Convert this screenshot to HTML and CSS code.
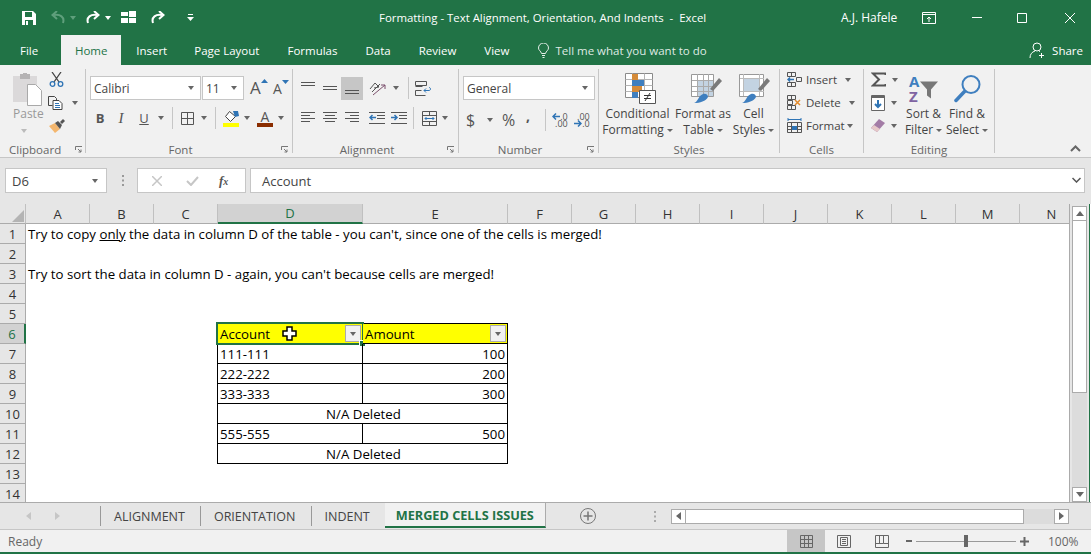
FILE: index.html
```html
<!DOCTYPE html>
<html lang="en">
<head>
    <meta charset="UTF-8">
    <title>Formatting - Text Alignment, Orientation, And Indents - Excel</title>
    <link rel="stylesheet" href="styles.css">
</head>
<body>
    <div class="titlebar">
        <div class="qat">
            <svg class="q-save" width="14" height="14" viewBox="0 0 14 14"><path fill="#fff" d="M0 0h11l3 3v11H0z"/><path fill="#217346" d="M3 1h7v5H3zM3 9h8v5H3z"/><path fill="#fff" d="M4 10h2v4H4z"/></svg>
            <svg class="q-undo" width="14" height="13" viewBox="0 0 14 13" fill="none" stroke="#5f9f7c" stroke-width="2"><path d="M12 12C14 6 9 3 3 4"/><path d="M6 0L1.500 4 6 8"/></svg>
            <i class="caret dim"></i>
            <svg class="q-redo" width="14" height="13" viewBox="0 0 14 13" fill="none" stroke="#fff" stroke-width="2"><path d="M2 12C0 6 5 3 11 4"/><path d="M8 0l4.500 4L8 8"/></svg>
            <i class="caret white"></i>
            <svg class="q-grid" width="15" height="13" viewBox="0 0 15 13" fill="#fff"><path d="M0 1h7v4H0zM0 7h7v5H0zM8 0h7v6H8zM8 7h7v5H8z"/></svg>
            <svg class="q-redo2" width="14" height="13" viewBox="0 0 14 13" fill="none" stroke="#fff" stroke-width="2"><path d="M2 12C0 6 5 3 11 4"/><path d="M8 0l4.500 4L8 8"/></svg>
            <svg class="q-more" width="7" height="7" viewBox="0 0 7 7" fill="#fff"><path d="M1 0h5v1H1zM0 3h7L3.500 7z"/></svg>
        </div>
        <div class="doc-title">Formatting - Text Alignment, Orientation, And Indents &nbsp;-&nbsp; Excel</div>
        <div class="user">A.J. Hafele</div>
        <svg class="win-ribbon" width="14" height="12" viewBox="0 0 14 12" fill="none" stroke="#fff"><path d="M.5.500h13v11H.5zM.5 2.500h13M7 10V5M5 7l2-2 2 2"/></svg>
        <svg class="win-min" width="10" height="1" viewBox="0 0 10 1"><path fill="#fff" d="M0 0h10v1H0z"/></svg>
        <svg class="win-max" width="10" height="10" viewBox="0 0 10 10" fill="none" stroke="#fff"><path d="M.5.500h9v9h-9z"/></svg>
        <svg class="win-close" width="10" height="10" viewBox="0 0 10 10" fill="none" stroke="#fff"><path d="M0 0l10 10M10 0L0 10"/></svg>
    </div>

    <div class="tabs">
        <span class="tab file">File</span>
        <span class="tab home">Home</span>
        <span class="tab insert">Insert</span>
        <span class="tab">Page Layout</span>
        <span class="tab">Formulas</span>
        <span class="tab">Data</span>
        <span class="tab">Review</span>
        <span class="tab">View</span>
        <svg class="bulb" width="11" height="15" viewBox="0 0 11 15" fill="none" stroke="#e6efe9"><path d="M3.500 10.500C3 8 .5 7.500.5 5a5 5 0 0 1 10 0c0 2.500-2.500 3-3 5.500zM4 12.500h3M4.500 14.500h2"/></svg>
        <span class="tell">Tell me what you want to do</span>
        <svg class="person" width="16" height="17" viewBox="0 0 16 17" fill="none" stroke="#fff"><circle cx="8" cy="5" r="4"/><path d="M1 16c0-4 2-6 5-7M10 9l1 .5M12.500 11v5M10 13.500h5"/></svg>
        <span class="share">Share</span>
    </div>

    <div class="ribbon">
        <section class="group g-clipboard">
            <div class="group-body">
                <div class="big paste">
                    <svg class="big-icon" width="29" height="33" viewBox="0 0 29 33"><path fill="#dbd9da" d="M0 3h24v26H0z"/><path fill="#b5b3b4" d="M7 1h3V0h4v1h3v5H7z"/><path fill="#fff" stroke="#a9a9a9" d="M14.500 11.500h8l6 6v15h-14z"/></svg>
                    <span class="big-text dim">Paste</span>
                    <i class="caret pale"></i>
                </div>
                <div class="rows clip-rows">
                    <div class="row">
                        <svg class="cut" width="15" height="15" viewBox="0 0 15 15" fill="none" stroke="#444"><path d="M3 0l7 10M12 0L5 10" stroke-width="1.300"/><circle cx="3.500" cy="12" r="2.300" stroke="#2f74b5" stroke-width="1.300"/><circle cx="11.500" cy="12" r="2.300" stroke="#2f74b5" stroke-width="1.300"/></svg>
                    </div>
                    <div class="row">
                        <svg width="15" height="14" viewBox="0 0 15 14" fill="none" stroke="#444"><path d="M.5.500h6l2 2v2M.5.500v9h4"/><path fill="#fff" d="M5 4.500h6l3 3v6H5z"/><path d="M7 7.500h4M7 9.500h5M7 11.500h5" stroke="#2f74b5"/></svg>
                        <i class="caret copy-caret"></i>
                    </div>
                    <div class="row">
                        <svg class="brush" width="16" height="14" viewBox="0 0 16 14"><path fill="#f4b76f" d="M0 7l6-3 5 6-5 4z"/><path fill="#555" d="M6 4l3-2 4 4-2 4z"/><path fill="#555" d="M11 3l3-3 2 2-3 3z"/></svg>
                    </div>
                </div>
            </div>
            <div class="group-label clip-label"><span>Clipboard</span></div>
            <svg class="launcher" width="7" height="7" viewBox="0 0 7 7" fill="none" stroke="#777"><path d="M.5 4V.5H7M3 3l3 3M6 3.500V6H3.500"/></svg>
        </section>

        <section class="group g-font">
            <div class="group-body stack">
                <div class="font-row1">
                    <div class="combo font-name">Calibri<i class="caret"></i></div>
                    <div class="combo font-size">11<i class="caret"></i></div>
                    <span class="grow">A<svg width="7" height="4" viewBox="0 0 7 4"><path fill="#2f74b5" d="M0 4l3.500-4L7 4z"/></svg></span>
                    <span class="grow small">A<svg width="7" height="4" viewBox="0 0 7 4"><path fill="#2f74b5" d="M0 0h7L3.500 4z"/></svg></span>
                </div>
                <div class="font-row2">
                    <b class="glyph">B</b>
                    <i class="glyph italic">I</i>
                    <u class="glyph">U</u>
                    <i class="caret"></i>
                    <span class="sep"></span>
                    <svg width="13" height="13" viewBox="0 0 13 13" fill="none" stroke="#555"><path d="M.5.500h12v12H.5zM6.500.5v12M.5 6.500h12"/></svg>
                    <i class="caret"></i>
                    <span class="sep"></span>
                    <svg width="16" height="17" viewBox="0 0 16 17"><path fill="#fff" stroke="#444" d="M6.500 1.500l6 5-5 5-5-5z"/><path fill="#2f74b5" d="M10 1h5l1 5-4 1z"/><path fill="#ff0" d="M0 13h16v4H0z"/></svg>
                    <i class="caret"></i>
                    <span class="color-a">A</span>
                    <i class="caret"></i>
                </div>
            </div>
            <div class="group-label"><span>Font</span></div>
            <svg class="launcher" width="7" height="7" viewBox="0 0 7 7" fill="none" stroke="#777"><path d="M.5 4V.5H7M3 3l3 3M6 3.500V6H3.500"/></svg>
        </section>

        <section class="group g-align">
            <div class="group-body stack">
                <div class="align-row1">
                    <svg width="14" height="14" viewBox="0 0 14 14" stroke="#555"><path d="M0 1.500h14M0 4.500h14"/></svg>
                    <svg width="14" height="14" viewBox="0 0 14 14" stroke="#555"><path d="M0 5.500h14M0 8.500h14"/></svg>
                    <span class="selected"><svg width="14" height="14" viewBox="0 0 14 14" stroke="#555"><path d="M0 9.500h14M0 12.500h14"/></svg></span>
                    <svg width="17" height="16" viewBox="0 0 17 16" fill="none" stroke="#555"><path d="M1 9l5-6 4 4-5 1M3 12l8-8"/><path d="M4 15L16 5M12 5h4v4" stroke="#7b4f6c"/></svg>
                    <i class="caret"></i>
                    <span class="sep"></span>
                    <svg width="16" height="15" viewBox="0 0 16 15" fill="none" stroke="#555"><path d="M.5.500h11v4H.5zM.5 5.500h7M.5 9.500h6M.5 14.500h10M.5 9.500v5"/><path d="M9 9.500h5c2 0 2-3 0-3M9 9.500l2-2M9 9.500l2 2" stroke="#2f74b5"/></svg>
                </div>
                <div class="align-row2">
                    <svg width="14" height="12" viewBox="0 0 14 12" stroke="#555"><path d="M0 .5h14M0 3.500h9M0 6.500h14M0 9.500h9"/></svg>
                    <svg width="14" height="12" viewBox="0 0 14 12" stroke="#555"><path d="M0 .5h14M2 3.500h10M0 6.500h14M2 9.500h10"/></svg>
                    <svg width="14" height="12" viewBox="0 0 14 12" stroke="#555"><path d="M0 .5h14M5 3.500h9M0 6.500h14M5 9.500h9"/></svg>
                    <svg width="16" height="12" viewBox="0 0 16 12" fill="none" stroke="#555"><path d="M0 .5h16M8 3.500h8M8 6.500h8M0 11.500h16"/><path d="M7 5.500H1M3.500 3l-2.500 2.500L3.500 8" stroke="#2f74b5" stroke-width="1.500"/></svg>
                    <svg width="16" height="12" viewBox="0 0 16 12" fill="none" stroke="#555"><path d="M0 .5h16M8 3.500h8M8 6.500h8M0 11.500h16"/><path d="M0 5.500h6M3.500 3L6 5.500 3.500 8" stroke="#2f74b5" stroke-width="1.500"/></svg>
                    <span class="sep"></span>
                    <svg width="15" height="15" viewBox="0 0 15 15" fill="none" stroke="#555"><path d="M.5.500h14v14H.5zM.5 4.500h14M.5 10.500h14M7.500.5v4M7.500 10.500v4"/><path d="M3 7.500h9M4.500 6L3 7.500 4.500 9M10.500 6L12 7.500 10.500 9" stroke="#2f74b5"/></svg>
                    <i class="caret"></i>
                </div>
            </div>
            <div class="group-label"><span>Alignment</span></div>
            <svg class="launcher" width="7" height="7" viewBox="0 0 7 7" fill="none" stroke="#777"><path d="M.5 4V.5H7M3 3l3 3M6 3.500V6H3.500"/></svg>
        </section>

        <section class="group g-number">
            <div class="group-body stack">
                <div class="combo number-format">General<i class="caret"></i></div>
                <div class="number-row2">
                    <span class="glyph big-glyph">$</span>
                    <i class="caret"></i>
                    <span class="glyph big-glyph">%</span>
                    <b class="glyph comma">,</b>
                    <span class="sep"></span>
                    <div class="decimals">
                        <span class="dec-line"><svg width="8" height="7" viewBox="0 0 8 7" fill="none" stroke="#2f74b5" stroke-width="1.500"><path d="M8 3.500H1M4 .5L1 3.500l3 3"/></svg>.0</span>
                        <span class="dec-line">.00</span>
                    </div>
                    <div class="decimals">
                        <span class="dec-line">.00</span>
                        <span class="dec-line"><svg width="8" height="7" viewBox="0 0 8 7" fill="none" stroke="#2f74b5" stroke-width="1.500"><path d="M0 3.500h7M4 .5l3 3-3 3"/></svg>.0</span>
                    </div>
                </div>
            </div>
            <div class="group-label"><span>Number</span></div>
            <svg class="launcher" width="7" height="7" viewBox="0 0 7 7" fill="none" stroke="#777"><path d="M.5 4V.5H7M3 3l3 3M6 3.500V6H3.500"/></svg>
        </section>

        <section class="group g-styles">
            <div class="group-body">
                <div class="big cond">
                    <svg class="big-icon" width="31" height="31" viewBox="0 0 31 31"><path fill="#fff" stroke="#8a8a8a" d="M.5.500h27v24H.5z"/><path stroke="#b5b5b5" d="M7.500.5v24M19.500.5v24M.5 6.500h27M.5 12.500h27M.5 18.500h27"/><path fill="#d58b39" d="M7 1h6v6H7zM7 13h10v6H7z"/><path fill="#3f7fbf" d="M7 7h12v6H7zM7 19h6v6H7z"/><path fill="#fff" stroke="#555" d="M14.500 17.500h16v13h-16z"/><path stroke="#333" d="M19 22.500h7M19 25.500h7M25 20l-5 8" fill="none"/></svg>
                    <span class="big-text">Conditional</span>
                    <span class="big-text">Formatting<i class="caret tight"></i></span>
                </div>
                <div class="big fmt-table">
                    <svg class="big-icon" width="31" height="31" viewBox="0 0 31 31"><path fill="#fff" stroke="#999" d="M.5 1.500h22v22H.5z"/><path fill="#c3d3e2" d="M6 7h16v16H6z"/><path stroke="#aaa" d="M6.500 1v22M12.500 1v22M17.500 1v22M1 7.500h21M1 13.500h21M1 18.500h21"/><path fill="#7a7a7a" d="M19 16l9-11 3 3-9 10z"/><path fill="#3f7fbf" d="M3 30c4-1 4-7 9-9 3-1 5 1 5 3-2 4-8 6-14 6z"/></svg>
                    <span class="big-text">Format as</span>
                    <span class="big-text">Table<i class="caret tight"></i></span>
                </div>
                <div class="big cell-styles">
                    <svg class="big-icon" width="31" height="31" viewBox="0 0 31 31"><path fill="#fff" stroke="#999" d="M.5 1.500h24v22H.5z"/><path fill="#c3d3e2" d="M5 6h15v12H5z"/><path stroke="#bbb" d="M4.500 1v22M20.500 1v22M1 5.500h24M1 18.500h24"/><path fill="#7a7a7a" d="M19 16l9-11 3 3-9 10z"/><path fill="#3f7fbf" d="M3 30c4-1 4-7 9-9 3-1 5 1 5 3-2 4-8 6-14 6z"/></svg>
                    <span class="big-text">Cell</span>
                    <span class="big-text">Styles<i class="caret tight"></i></span>
                </div>
            </div>
            <div class="group-label"><span>Styles</span></div>
        </section>

        <section class="group g-cells">
            <div class="group-body">
                <div class="rows">
                    <div class="row cell-row">
                        <svg width="15" height="15" viewBox="0 0 15 15" fill="none" stroke="#555"><path d="M.5.500h8v4h-8zM4.500.5v4M.5 10.500h8v4h-8zM4.500 10.500v4"/><path d="M9.500 5.500h5v4h-5z"/><path d="M7 7.500H1M3 5.500l-2 2 2 2" stroke="#2f74b5" stroke-width="1.500"/></svg>
                        <span>Insert</span><i class="caret"></i>
                    </div>
                    <div class="row cell-row">
                        <svg width="15" height="15" viewBox="0 0 15 15" fill="none" stroke="#555"><path d="M.5.500h8v4h-8zM4.500.5v4M.5 10.500h8v4h-8zM4.500 10.500v4M.5 5.500h5v4h-5z"/><path d="M8 5l5 5M13 5l-5 5" stroke="#e28a2b" stroke-width="1.500"/></svg>
                        <span>Delete</span><i class="caret"></i>
                    </div>
                    <div class="row cell-row">
                        <svg width="15" height="15" viewBox="0 0 15 15" fill="none" stroke="#555"><path d="M.5 4.500h14v10H.5zM4.500 4.500v10M10.500 4.500v10M.5 8.500h14M.5 11.500h14"/><path d="M5 8h5v4H5z" fill="#2f74b5" stroke="none"/><path d="M1 1.500h13M1 0v3M14 0v3" stroke="#2f74b5"/></svg>
                        <span>Format</span><i class="caret near"></i>
                    </div>
                </div>
            </div>
            <div class="group-label"><span>Cells</span></div>
        </section>

        <section class="group g-editing">
            <div class="group-body">
                <div class="rows edit-rows">
                    <div class="row">
                        <svg width="15" height="15" viewBox="0 0 15 15" fill="none" stroke="#555" stroke-width="2"><path d="M14.500 3V1.500H2L8 7.500 2 13.500h12.500V12"/></svg>
                        <i class="caret"></i>
                    </div>
                    <div class="row">
                        <svg width="14" height="16" viewBox="0 0 14 16" fill="#fff" stroke="#666"><path d="M.5.500h13v15H.5z"/><path d="M1 1h12v2H1z" fill="#666" stroke="none"/><path d="M7 5v7M4 9l3 3 3-3" fill="none" stroke="#2f74b5" stroke-width="2"/></svg>
                        <i class="caret"></i>
                    </div>
                    <div class="row">
                        <svg width="14" height="13" viewBox="0 0 14 13"><path fill="#a37ca6" d="M0 9l8-9 6 4-8 9z"/><path fill="#e6c8c8" d="M0 9l3-3 6 4-3 3z"/></svg>
                        <i class="caret"></i>
                    </div>
                </div>
                <div class="big sort">
                    <svg class="big-icon" width="29" height="28" viewBox="0 0 29 28"><text x="0" y="12" class="sort-a">A</text><text x="0" y="27" class="sort-z">Z</text><path fill="#777" d="M11 7h18l-7 8v9l-4-3v-6z"/></svg>
                    <span class="big-text">Sort &amp;</span>
                    <span class="big-text">Filter<i class="caret tight"></i></span>
                </div>
                <div class="big find">
                    <svg class="big-icon" width="27" height="28" viewBox="0 0 27 28" fill="none" stroke="#3f7fbf"><circle cx="17" cy="10" r="8.500" stroke-width="2"/><path d="M10.500 17L2 26" stroke-width="3.500" stroke-linecap="round"/></svg>
                    <span class="big-text">Find &amp;</span>
                    <span class="big-text">Select<i class="caret tight"></i></span>
                </div>
            </div>
            <div class="group-label"><span>Editing</span></div>
        </section>

        <svg class="collapse" width="11" height="7" viewBox="0 0 11 7" fill="none" stroke="#666" stroke-width="2"><path d="M1 6l4.500-4.500L10 6"/></svg>
    </div>

    <div class="formula">
        <div class="box name-box">D6<i class="caret"></i></div>
        <svg class="grip" width="3" height="11" viewBox="0 0 3 11" fill="#999"><path d="M0 0h2v2H0zM0 4.500h2v2H0zM0 9h2v2H0z"/></svg>
        <div class="box fx-box">
            <svg width="10" height="10" viewBox="0 0 10 10" fill="none" stroke="#c6c6c6" stroke-width="1.500"><path d="M0 0l10 10M10 0L0 10"/></svg>
            <svg width="13" height="10" viewBox="0 0 13 10" fill="none" stroke="#c6c6c6" stroke-width="2"><path d="M1 5l4 4 7-8"/></svg>
            <span class="fx">f<small>x</small></span>
        </div>
        <div class="box input-box">Account
            <svg class="input-down" width="9" height="6" viewBox="0 0 9 6" fill="none" stroke="#555" stroke-width="1.500"><path d="M.5 1l4 4 4-4"/></svg>
        </div>
    </div>

    <div class="sheet-area">
        <div class="sheet">
            <table class="grid">
                <colgroup>
                    <col class="c-head"><col class="c-std"><col class="c-std"><col class="c-std"><col class="c-wide"><col class="c-wide"><col class="c-std"><col class="c-std"><col class="c-std"><col class="c-std"><col class="c-std"><col class="c-std"><col class="c-std"><col class="c-std"><col class="c-std">
                </colgroup>
                <tr>
                    <th class="corner"><svg width="12" height="12" viewBox="0 0 12 12"><path fill="#b4b4b4" d="M12 0v12H0z"/></svg></th>
                    <th>A</th><th>B</th><th>C</th><th class="active-col">D</th><th>E</th><th>F</th><th>G</th><th>H</th><th>I</th><th>J</th><th>K</th><th>L</th><th>M</th><th>N</th>
                </tr>
                <tr><th>1</th><td colspan="14">Try to copy <u>only</u> the data in column D of the table - you can't, since one of the cells is merged!</td></tr>
                <tr><th>2</th><td colspan="14"></td></tr>
                <tr><th>3</th><td colspan="14">Try to sort the data in column D - again, you can't because cells are merged!</td></tr>
                <tr><th>4</th><td colspan="14"></td></tr>
                <tr><th>5</th><td colspan="3"></td><td class="edge-b"></td><td class="edge-b"></td><td colspan="9"></td></tr>
                <tr>
                    <th class="active-row">6</th><td colspan="2"></td><td class="edge-r"></td>
                    <td class="cell head sel">Account
                        <span class="filter"><i class="caret"></i></span>
                        <span class="selection"></span>
                        <span class="handle"></span>
                        <svg class="pointer" width="15" height="15" viewBox="0 0 15 15"><path fill="#fff" stroke="#000" stroke-width="1.500" d="M5 1h5v4h4v5h-4v4H5v-4H1V5h4z"/></svg>
                    </td>
                    <td class="cell head">Amount<span class="filter"><i class="caret"></i></span></td>
                    <td colspan="9"></td>
                </tr>
                <tr><th>7</th><td colspan="2"></td><td class="edge-r"></td><td class="cell">111-111</td><td class="cell num">100</td><td colspan="9"></td></tr>
                <tr><th>8</th><td colspan="2"></td><td class="edge-r"></td><td class="cell">222-222</td><td class="cell num">200</td><td colspan="9"></td></tr>
                <tr><th>9</th><td colspan="2"></td><td class="edge-r"></td><td class="cell">333-333</td><td class="cell num">300</td><td colspan="9"></td></tr>
                <tr><th>10</th><td colspan="2"></td><td class="edge-r"></td><td class="cell merged" colspan="2">N/A Deleted</td><td colspan="9"></td></tr>
                <tr><th>11</th><td colspan="2"></td><td class="edge-r"></td><td class="cell">555-555</td><td class="cell num">500</td><td colspan="9"></td></tr>
                <tr><th>12</th><td colspan="2"></td><td class="edge-r"></td><td class="cell merged" colspan="2">N/A Deleted</td><td colspan="9"></td></tr>
                <tr><th>13</th><td colspan="14"></td></tr>
                <tr><th>14</th><td colspan="14"></td></tr>
            </table>
        </div>
        <div class="vscroll">
            <span class="sb-btn"><i class="tri up"></i></span>
            <span class="sb-thumb"></span>
            <span class="sb-track"></span>
            <span class="sb-btn"><i class="tri down"></i></span>
        </div>
    </div>

    <div class="sheet-tabs">
        <div class="tab-nav"><i class="tri left pale-tri"></i><i class="tri right pale-tri"></i></div>
        <span class="sheet-tab">ALIGNMENT</span>
        <span class="sheet-tab">ORIENTATION</span>
        <span class="sheet-tab no-sep">INDENT</span>
        <span class="sheet-tab current">MERGED CELLS ISSUES</span>
        <svg class="add-sheet" width="16" height="16" viewBox="0 0 16 16" fill="none" stroke="#777"><circle cx="8" cy="8" r="7.500"/><path d="M8 3.500v9M3.500 8h9" stroke-width="1.500"/></svg>
        <svg class="grip tab-grip" width="3" height="11" viewBox="0 0 3 11" fill="#aaa"><path d="M0 0h2v2H0zM0 4.500h2v2H0zM0 9h2v2H0z"/></svg>
        <div class="hscroll">
            <span class="sb-btn h"><i class="tri left"></i></span>
            <span class="hs-thumb"></span>
            <span class="hs-track"></span>
            <span class="sb-btn h"><i class="tri right"></i></span>
        </div>
    </div>

    <div class="statusbar">
        <span class="ready">Ready</span>
        <div class="views">
            <span class="view on"><svg width="13" height="13" viewBox="0 0 13 13" fill="none" stroke="#666"><path d="M.5.500h12v12H.5zM4.500.5v12M8.500.5v12M.5 4.500h12M.5 8.500h12"/></svg></span>
            <span class="view"><svg width="14" height="13" viewBox="0 0 14 13" fill="none" stroke="#666"><path d="M.5.500h13v12H.5zM3.500 2.500h7v8h-7zM5 4.500h4M5 6.500h4M5 8.500h4"/></svg></span>
            <span class="view"><svg width="14" height="13" viewBox="0 0 14 13" fill="none" stroke="#666"><path d="M.5.500h13v12H.5zM.5 8.500h8M4.500.5v8M8.500.5v8h5"/></svg></span>
        </div>
        <i class="zoom-minus"></i>
        <div class="zoom-slider"><i class="zoom-thumb"></i></div>
        <svg class="zoom-plus" width="9" height="9" viewBox="0 0 9 9" stroke="#666" stroke-width="2"><path d="M4.500 0v9M0 4.500h9"/></svg>
        <span class="zoom-pct">100%</span>
    </div>
</body>
</html>
```

FILE: styles.css
```css
* {
    box-sizing: border-box;
}
html, body {
    margin: 0;
    height: 554px;
    overflow: hidden;
}
body {
    font-family: "Open Sans", "Noto Sans", sans-serif;
    font-size: 12px;
    color: #444;
    background: #e6e6e6;
}
svg {
    display: block;
    flex: none;
}

/* shared bits */
.caret {
    display: inline-block;
    flex: none;
    width: 0;
    height: 0;
    border-top: 4px solid #666;
    border-left: 3.5px solid transparent;
    border-right: 3.5px solid transparent;
}
.caret.white { border-top-color: #fff; }
.caret.dim { border-top-color: #5f9f7c; }
.caret.pale { border-top-color: #bbb; }
.caret.tight {
    margin-left: 3px;
    vertical-align: 2px;
    border-top-width: 3px;
    border-left-width: 3px;
    border-right-width: 3px;
}
.sep {
    display: block;
    width: 1px;
    height: 22px;
    background: #c6c6c6;
}
.tri {
    display: block;
    width: 0;
    height: 0;
    border: 4px solid transparent;
}
.tri.up { border-top: 0; border-bottom: 5px solid #666; }
.tri.down { border-bottom: 0; border-top: 5px solid #666; }
.tri.left { border-left: 0; border-right: 5px solid #666; }
.tri.right { border-right: 0; border-left: 5px solid #666; }
.tri.left.pale-tri { border-right-color: #c6c6c6; }
.tri.right.pale-tri { border-left-color: #c6c6c6; }

/* title bar */
.titlebar {
    display: flex;
    align-items: center;
    height: 35px;
    background: #217346;
    color: #fff;
}
.qat {
    display: flex;
    align-items: center;
    padding-left: 22px;
    width: 379px;
}
.q-undo { margin-left: 15px; }
.qat .caret.dim { margin: 0 0 0 5px; }
.q-redo { margin-left: 10px; }
.qat .caret.white { margin-left: 5px; }
.q-grid { margin-left: 10px; }
.q-redo2 { margin-left: 15px; }
.q-more { margin-left: 22px; }
.doc-title {
    width: 462px;
    font-size: 11.4px;
    white-space: pre;
}
.user { width: 81px; }
.win-ribbon { margin-right: 36px; }
.win-min { margin-right: 35px; }
.win-max { margin-right: 38px; }

/* ribbon tabs */
.tabs {
    display: flex;
    align-items: center;
    height: 30px;
    padding: 0 8px 0 20px;
    background: #217346;
    color: #fff;
    font-size: 11.5px;
    white-space: nowrap;
}
.tab { margin-right: 28px; }
.tab.file { margin-right: 23px; }
.tab.home {
    display: flex;
    align-items: center;
    justify-content: center;
    width: 60px;
    height: 30px;
    background: #f1f1f1;
    color: #217346;
    margin-right: 15px;
}
.tab.insert { margin-right: 27px; }
.tab + .bulb { margin: 0 6px 0 1px; }
.tell { color: #dfeae4; }
.person { margin: 0 7px 0 auto; }

/* ribbon */
.ribbon {
    position: relative;
    display: flex;
    height: 93px;
    padding-top: 4px;
    background: #f1f1f1;
    border-bottom: 1px solid #c6c6c6;
}
.group {
    position: relative;
    display: flex;
    flex-direction: column;
    height: 84px;
    border-right: 1px solid #c6c6c6;
}
.g-clipboard { width: 86px; }
.g-font { width: 207px; }
.g-align { width: 166px; }
.g-number { width: 140px; }
.g-styles { width: 181px; }
.g-cells { width: 84px; }
.g-editing { width: 131px; }
.group-body {
    display: flex;
    height: 74px;
}
.group-body.stack {
    flex-direction: column;
    padding-top: 7px;
}
.group-label {
    height: 10px;
    line-height: 14px;
    font-size: 11.5px;
    text-align: center;
    color: #666;
    white-space: nowrap;
}
.g-font .group-label,
.g-align .group-label,
.g-number .group-label {
    padding-right: 17px;
}
.clip-label {
    text-align: left;
    padding-left: 9px;
}
.launcher {
    position: absolute;
    right: 4px;
    bottom: 0;
}
.g-clipboard .launcher { right: 3px; }
.big {
    display: flex;
    flex-direction: column;
    align-items: center;
    white-space: nowrap;
    color: #444;
}
.big-icon {
    height: 31px;
    margin: 4px 0 2px;
}
.big-text {
    height: 16px;
    line-height: 16px;
}
.big-text.dim { color: #999; }
.rows {
    display: flex;
    flex-direction: column;
    margin-top: -1px;
}
.row {
    display: flex;
    align-items: center;
    height: 23px;
}

/* clipboard */
.paste {
    width: 42px;
    padding-left: 13px;
    align-items: flex-start;
}
.paste .big-icon { flex: none; height: 33px; margin: 4px 0 0; }
.paste .caret { margin: 7px 0 0 8px; }
.clip-rows { padding-left: 6px; }
.cut { margin-left: 1px; }
.brush { margin-left: 1px; }
.copy-caret { margin-left: 9px; }

/* font */
.combo {
    display: flex;
    align-items: center;
    justify-content: space-between;
    height: 24px;
    padding: 0 6px 0 3px;
    background: #fff;
    border: 1px solid #c6c6c6;
    color: #444;
}
.font-row1 {
    display: flex;
    align-items: center;
    margin-left: 4px;
}
.font-name { width: 111px; margin-right: 1px; }
.font-size { width: 42px; }
.grow {
    display: flex;
    align-items: flex-start;
    margin-left: 6px;
    width: 17px;
    font-size: 17px;
    line-height: 20px;
    color: #555;
}
.grow svg { margin-top: 1px; }
.grow.small { margin-left: 6px; font-size: 14px; padding-top: 2px; }
.font-row2 {
    display: grid;
    grid-template-columns: 20px 22px 24px 10px 12px 18px 16px 6px 26px 6px 30px 2px;
    align-items: center;
    justify-items: center;
    height: 24px;
    margin: 6px 0 0 4px;
}
.glyph {
    font-size: 13px;
    font-style: normal;
    color: #555;
}
.glyph.italic { font-family: "Liberation Serif", serif; font-style: italic; font-size: 15px; }
b.glyph { font-weight: 700; }
.color-a {
    width: 16px;
    height: 17px;
    line-height: 13px;
    text-align: center;
    font-size: 14px;
    color: #555;
    border-bottom: 4px solid #8a2d00;
}

/* alignment */
.align-row1, .align-row2 {
    display: grid;
    align-items: center;
    justify-items: center;
    margin-left: 4px;
}
.align-row1 {
    grid-template-columns: 22px 22px 22px 28px 10px 14px 16px;
    height: 24px;
    justify-content: start;
}
.selected {
    display: flex;
    align-items: center;
    justify-content: center;
    width: 22px;
    height: 23px;
    background: #c6c6c6;
}
.align-row2 {
    grid-template-columns: 22px 22px 22px 28px 16px 12px 20px 12px;
    height: 24px;
    margin-top: 6px;
    justify-content: start;
}

/* number */
.number-format {
    width: 132px;
    margin-left: 4px;
}
.number-row2 {
    display: grid;
    grid-template-columns: 19px 20px 17px 22px 12px 18px 26px;
    align-items: center;
    justify-items: center;
    height: 24px;
    margin: 6px 0 0 2px;
}
.big-glyph { font-size: 16px; }
.comma {
    font-size: 14px;
    margin-bottom: 9px;
}
.decimals {
    display: flex;
    flex-direction: column;
    align-items: flex-end;
    font-size: 9px;
    line-height: 7px;
    color: #555;
}
.dec-line {
    display: flex;
    align-items: center;
    height: 7px;
}

/* styles */
.g-styles .group-body { padding-left: 5px; }
.cond { width: 67px; }
.fmt-table { width: 64px; }
.cell-styles { width: 37px; }
.cond .big-icon, .fmt-table .big-icon { margin-left: 6px; }
.cell-styles .big-icon { margin-left: 2px; }

/* cells */
.cell-row { padding-left: 7px; }
.cell-row span { margin-left: 4px; font-size: 11.5px; }
.cell-row .caret { margin-left: 8px; }
.cell-row .caret.near { margin-left: 2px; }

/* editing */
.edit-rows { width: 41px; padding-left: 7px; }
.edit-rows .caret { margin-left: 6px; }
.sort { width: 37px; margin-left: 0; }
.find { width: 44px; margin-left: 3px; }
.sort-a { font: 700 15px "Open Sans", sans-serif; fill: #3f7fbf; }
.sort-z { font: 700 15px "Open Sans", sans-serif; fill: #8064a2; }
.sort .big-icon { overflow: visible; }
.collapse {
    position: absolute;
    right: 10px;
    bottom: 5px;
}

/* formula bar */
.formula {
    display: flex;
    align-items: flex-start;
    height: 46px;
    padding: 10px 0 0 5px;
    background: #e6e6e6;
}
.box {
    display: flex;
    align-items: center;
    height: 25px;
    background: #fff;
    border: 1px solid #c6c6c6;
    font-size: 13px;
}
.name-box {
    justify-content: space-between;
    width: 102px;
    padding: 0 8px 0 6px;
}
.grip { margin: 7px 12px 0 15px; }
.fx-box {
    width: 109px;
    padding-left: 14px;
    gap: 24px;
}
.fx {
    margin-left: -4px;
    font: italic 700 13px "Liberation Serif", serif;
    color: #555;
}
.fx small { font-size: 10px; }
.input-box {
    position: relative;
    width: 835px;
    margin-left: 4px;
    padding-left: 11px;
}
.input-down {
    position: absolute;
    right: 3px;
    top: 8px;
}

/* sheet */
.sheet-area {
    display: flex;
    height: 299px;
    background: #fff;
    border-bottom: 1px solid #ababab;
}
.sheet {
    width: 1070px;
    background: #fff;
    overflow: hidden;
    border-right: 1px solid #ababab;
}
.grid {
    table-layout: fixed;
    border-collapse: separate;
    border-spacing: 0;
    width: 1084px;
    font-size: 13.25px;
    color: #000;
}
.c-head { width: 26px; }
.c-std { width: 64px; }
.c-wide { width: 145px; }
.grid tr {
    height: 20px;
}
.grid th {
    height: 20px;
    padding: 0;
    font-size: 13px;
    font-weight: 400;
    color: #333;
    background: #e6e6e6;
    border-right: 1px solid #ababab;
    border-bottom: 1px solid #ababab;
}
.grid tr:first-child th {
    border-right-color: #c0c0c0;
}
.grid th.corner svg {
    margin: 5px 0 0 12px;
}
.grid th.active-col {
    background: #d2d2d2;
    color: #217346;
    border-bottom: 2px solid #217346;
}
.grid th.active-row {
    background: #d2d2d2;
    color: #217346;
    border-right: 2px solid #217346;
}
.grid td {
    height: 20px;
    padding: 0 0 0 2px;
    white-space: nowrap;
}
.grid td.edge-b { border-bottom: 1px solid #000; }
.grid td.edge-r { border-right: 1px solid #000; }
.grid td.cell {
    position: relative;
    border-right: 1px solid #000;
    border-bottom: 1px solid #000;
}
.grid td.num { text-align: right; padding-right: 2px; }
.grid td.merged { text-align: center; }
.grid td.head { background: #ff0; }
.filter {
    position: absolute;
    right: 1px;
    top: 1px;
    display: flex;
    align-items: center;
    justify-content: center;
    width: 16px;
    height: 17px;
    background: #f1f1f1;
    border: 1px solid #ababab;
}
.selection {
    position: absolute;
    left: -2px;
    top: -2px;
    width: 148px;
    height: 23px;
    border: 2px solid #217346;
}
.handle {
    position: absolute;
    right: -3px;
    bottom: -3px;
    width: 6px;
    height: 6px;
    background: #217346;
    border: 1px solid #fff;
    border-right: 0;
    border-bottom: 0;
}
.pointer {
    position: absolute;
    left: 64px;
    top: 2px;
}
.vscroll {
    display: flex;
    flex-direction: column;
    width: 20px;
    padding: 2px 2px 0;
    background: #e6e6e6;
    border-right: 1px solid #217346;
}
.sb-btn {
    display: flex;
    align-items: center;
    justify-content: center;
    flex: none;
    width: 15px;
    height: 15px;
    background: #fff;
    border: 1px solid #ababab;
}
.sb-thumb {
    height: 172px;
    background: #fff;
    border: 1px solid #ababab;
    border-top: 0;
}
.sb-track {
    flex: 1;
    background: #dcdcdc;
}

/* sheet tabs */
.sheet-tabs {
    display: flex;
    align-items: center;
    height: 27px;
    background: #e6e6e6;
    border-bottom: 1px solid #c6c6c6;
}
.tab-nav {
    display: flex;
    gap: 24px;
    justify-content: center;
    width: 100px;
    padding-right: 15px;
}
.sheet-tab {
    display: flex;
    align-items: center;
    height: 20px;
    padding: 0 15px 0 13px;
    border-left: 1px solid #999;
    color: #444;
    font-size: 12.5px;
    white-space: nowrap;
}
.sheet-tab.current {
    align-self: flex-start;
    width: 161px;
    height: 25px;
    padding: 0 0 0 11px;
    background: #f1f1f1;
    border-left: 0;
    border-right: 1px solid #ababab;
    border-bottom: 2px solid #217346;
    color: #217346;
    font-size: 12.7px;
    font-weight: 700;
}
.add-sheet { margin-left: 34px; }
.tab-grip { margin: 0 14px 0 58px; }
.hscroll {
    display: flex;
    width: 398px;
    height: 15px;
}
.hs-thumb {
    width: 338px;
    background: #fff;
    border: 1px solid #ababab;
    border-left: 0;
}
.hs-track {
    flex: 1;
    background: #dcdcdc;
}

/* status bar */
.statusbar {
    display: flex;
    align-items: center;
    height: 24px;
    padding-left: 8px;
    background: #f1f1f1;
    border-bottom: 2px solid #217346;
    color: #666;
}
.ready { width: 779px; }
.views {
    display: flex;
    height: 22px;
}
.view {
    display: flex;
    align-items: center;
    justify-content: center;
    width: 38px;
}
.view.on { background: #c6c6c6; }
.zoom-minus {
    width: 6px;
    height: 2px;
    margin: 0 4px 0 5px;
    background: #666;
}
.zoom-slider {
    position: relative;
    width: 100px;
    height: 1px;
    background: #999;
}
.zoom-thumb {
    position: absolute;
    left: 48px;
    top: -6px;
    width: 4px;
    height: 12px;
    background: #666;
}
.zoom-plus { margin: 0 19px 0 4px; }
```
